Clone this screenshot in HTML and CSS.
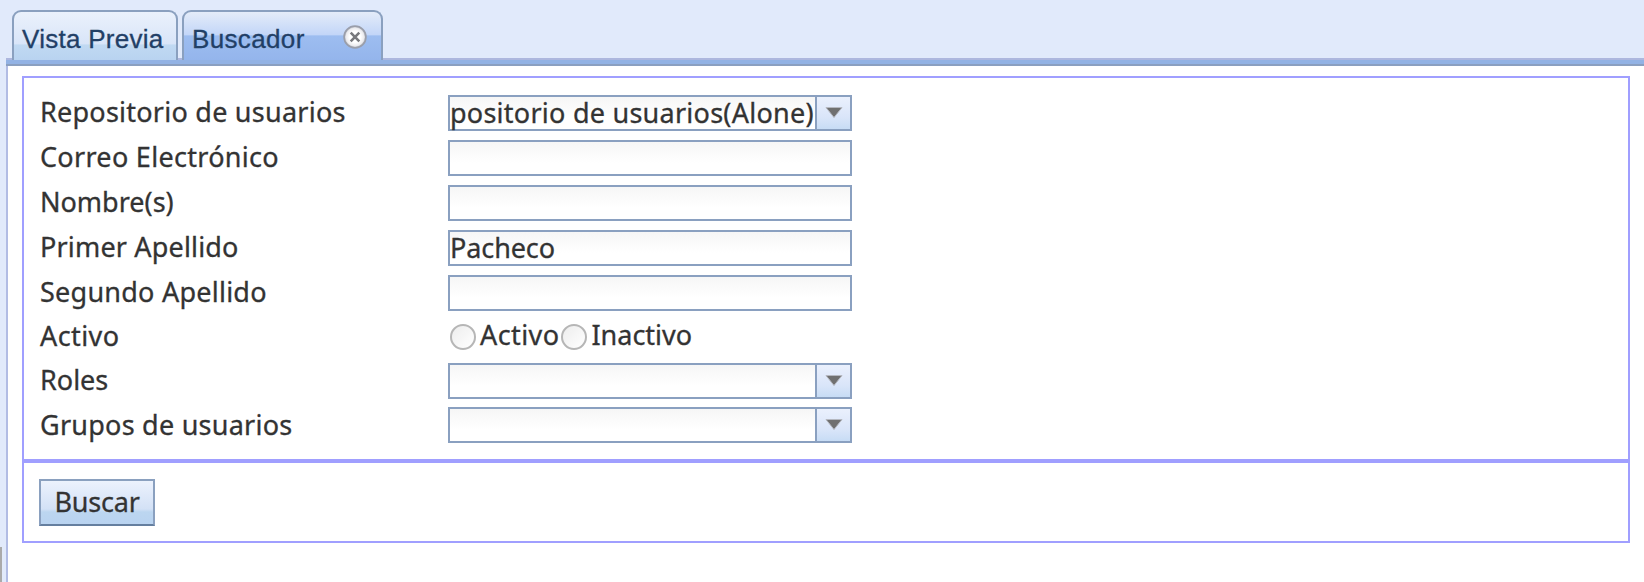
FILE: index.html
```html
<!DOCTYPE html>
<html lang="es">
<head>
<meta charset="utf-8">
<title>Buscador</title>
<link rel="stylesheet" href="styles.css">
</head>
<body>
<nav class="tabs">
  <div class="tab"><span class="tab-text preview">Vista Previa</span></div>
  <div class="tab active"><span class="tab-text search">Buscador</span>
    <svg class="close" width="26" height="26" viewBox="0 0 26 26">
      <defs><radialGradient id="ring"><stop offset=".5" stop-color="#fff"/><stop offset=".8" stop-color="#ececef"/><stop offset="1" stop-color="#c4c5ca"/></radialGradient></defs>
      <circle cx="13" cy="13" r="10.9" fill="url(#ring)" stroke="#9a9eaa" stroke-width="1.7"/>
      <path d="M8.7 8.7l8.6 8.6M17.3 8.7l-8.6 8.6" stroke="#77787c" stroke-width="2.6"/>
    </svg>
  </div>
</nav>
<div class="strip"></div>
<main class="panel">
  <section class="box fields">
    <div class="row"><span class="label l1">Repositorio de usuarios</span><div class="input combo"><span class="value v1">positorio de usuarios(Alone)</span><span class="trigger"><svg width="20" height="14" viewBox="0 0 20 14"><path d="M2 1.5h16l-8 10z" fill="#707070" stroke="#b5b8c0" stroke-width="1"/></svg></span></div></div>
    <div class="row"><span class="label l2">Correo Electrónico</span><div class="input"></div></div>
    <div class="row"><span class="label l3">Nombre(s)</span><div class="input"></div></div>
    <div class="row"><span class="label l4">Primer Apellido</span><div class="input"><span class="value v2">Pacheco</span></div></div>
    <div class="row"><span class="label l5">Segundo Apellido</span><div class="input"></div></div>
    <div class="row"><span class="label l6">Activo</span><div class="radios"><i class="radio"></i><span class="option o1">Activo</span><i class="radio"></i><span class="option o2">Inactivo</span></div></div>
    <div class="row"><span class="label l7">Roles</span><div class="input combo"><span class="value"></span><span class="trigger"><svg width="20" height="14" viewBox="0 0 20 14"><path d="M2 1.5h16l-8 10z" fill="#707070" stroke="#b5b8c0" stroke-width="1"/></svg></span></div></div>
    <div class="row"><span class="label l8">Grupos de usuarios</span><div class="input combo"><span class="value"></span><span class="trigger"><svg width="20" height="14" viewBox="0 0 20 14"><path d="M2 1.5h16l-8 10z" fill="#707070" stroke="#b5b8c0" stroke-width="1"/></svg></span></div></div>
  </section>
  <section class="box actions"><button class="button">Buscar</button></section>
</main>
<i class="splitter"></i>
</body>
</html>
```
FILE: styles.css
```css
* { box-sizing: border-box; }
body {
  margin: 0;
  height: 582px;
  overflow: hidden;
  position: relative;
  background: #e1eafb;
  color: #333;
  font: 27px/36px "Noto Sans", "Open Sans", sans-serif;
  -webkit-text-stroke: .3px;
  display: flex;
  flex-direction: column;
}
.tabs {
  display: flex;
  gap: 4px;
  height: 60px;
  padding: 10px 0 0 12px;
  background: linear-gradient(#adb7de, #adb7de) 6px 58px / 100% 2px no-repeat;
}
.tab {
  width: 166px;
  height: 50px;
  display: flex;
  align-items: flex-start;
  padding: 11px 0 0 8px;
  border: 2px solid #8aa0bf;
  border-bottom: 0;
  border-radius: 9px 9px 0 0;
  background: linear-gradient(#eaf1fc 0, #d9e5f8 66%, #c0d9f2 69%, #b9d3f0 100%);
  color: #223f66;
  font: 26px/32px "Liberation Sans", sans-serif;
  white-space: nowrap;
}
.preview { letter-spacing: .27px; }
.search { letter-spacing: .35px; }
.tab.active {
  width: 201px;
  justify-content: space-between;
  padding: 11px 13px 0 8px;
  background: linear-gradient(#e4ecf9 0, #c3d6f8 47%, #9dbdf0 50%, #94b5ec 100%);
}
.close { margin-top: 1px; }
.strip {
  flex: none;
  height: 6px;
  margin-left: 6px;
  background: #92b2e4;
  border-bottom: 2px solid #8a9fc0;
}
.panel {
  flex: 1;
  margin-left: 6px;
  padding: 10px 14px 0;
  border-left: 2px solid #b1bce4;
  background: #fff;
}
.box { border: 2px solid #a09fff; }
.fields {
  height: 385px;
  padding: 17px 0 0 15px;
  display: grid;
  grid-template-rows: repeat(5, 45px) 43px 44px 36px;
}
.row { display: grid; grid-template-columns: 409px 404px; }
.label, .option { white-space: nowrap; }
.label { margin-top: -1px; padding-left: 1px; letter-spacing: .24px; }
.l2 { letter-spacing: .3px; }
.l3 { letter-spacing: 0; }
.l4 { letter-spacing: .17px; }
.l6 { margin-top: -2px; letter-spacing: .4px; }
.l7 { letter-spacing: 0; }
.l8 { margin-top: 0; }
.input {
  height: 36px;
  display: flex;
  border: 2px solid #8aa0c0;
  background: linear-gradient(#f6f6f6, #fff 65%);
}
.value { flex: 1; line-height: 32px; white-space: nowrap; }
.v1 { letter-spacing: .25px; }
.v2 { letter-spacing: -.1px; }
.combo .value { width: 365px; flex: none; }
.trigger {
  flex: 1;
  display: flex;
  justify-content: center;
  padding-top: 9px;
  border-left: 2px solid #8aa0c0;
  background: linear-gradient(#eaf0fd, #d9e5f9 65%, #c7dcf5);
}
.radios { display: flex; height: 36px; line-height: 32px; margin-top: -1px; }
.o1 { letter-spacing: .4px; }
.radio {
  flex: none;
  width: 26px;
  height: 26px;
  margin: 5px 4px 0 2px;
  border: 2px solid #b6b6b6;
  border-radius: 50%;
  background: linear-gradient(135deg, #ededed, #fff);
}
.actions { height: 82px; padding: 16px 0 0 15px; }
.button {
  display: block;
  width: 116px;
  height: 47px;
  padding: 0 0 2px;
  border: 2px solid #8aa0bf;
  border-bottom-color: #657f9f;
  border-radius: 0;
  background: linear-gradient(#ecf2fd, #d3e1f6 65%, #bcd6f0 72%, #b9d3f0);
  color: #333;
  font: inherit;
  letter-spacing: -.2px;
}
.splitter { position: absolute; left: 0; top: 547px; width: 2px; height: 35px; background: #aaa; }
```
